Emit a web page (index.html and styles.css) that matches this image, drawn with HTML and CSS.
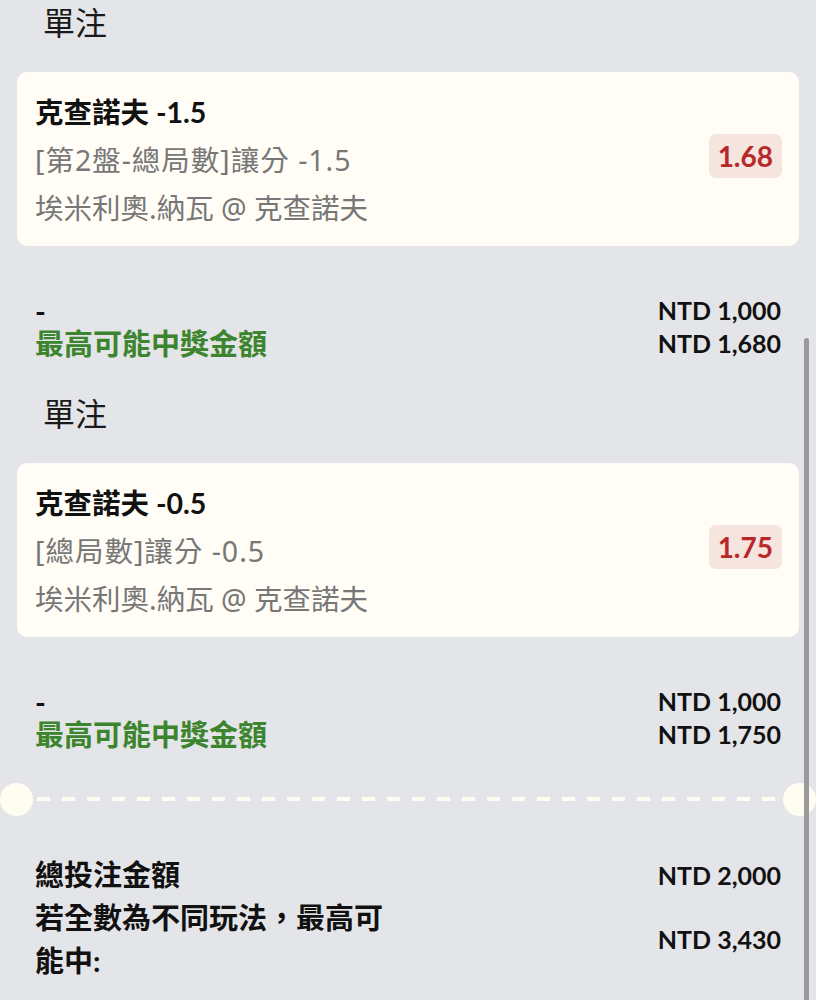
FILE: index.html
```html
<!DOCTYPE html>
<html lang="zh-Hant">
<head>
<meta charset="utf-8">
<link rel="stylesheet" href="styles.css">
</head>
<body>
<div class="page">
  <section class="bet">
    <h2 class="bet-type">單注</h2>
    <div class="card">
      <div class="card-info">
        <div class="card-title">克查諾夫 -1.5</div>
        <div class="card-line market">[第2盤-總局數]讓分 -1.5</div>
        <div class="card-line">埃米利奧.納瓦 @ 克查諾夫</div>
      </div>
      <div class="odds">1.68</div>
    </div>
    <div class="summary">
      <div class="row"><span class="label">-</span><span class="amount">NTD 1,000</span></div>
      <div class="row"><span class="label green">最高可能中獎金額</span><span class="amount">NTD 1,680</span></div>
    </div>
  </section>

  <section class="bet">
    <h2 class="bet-type">單注</h2>
    <div class="card">
      <div class="card-info">
        <div class="card-title">克查諾夫 -0.5</div>
        <div class="card-line market">[總局數]讓分 -0.5</div>
        <div class="card-line">埃米利奧.納瓦 @ 克查諾夫</div>
      </div>
      <div class="odds">1.75</div>
    </div>
    <div class="summary">
      <div class="row"><span class="label">-</span><span class="amount">NTD 1,000</span></div>
      <div class="row"><span class="label green">最高可能中獎金額</span><span class="amount">NTD 1,750</span></div>
    </div>
  </section>
</div>

<div class="divider">
  <span class="notch"></span>
  <span class="dashes"></span>
  <span class="notch"></span>
</div>

<div class="totals">
  <div class="total-row">
    <span class="total-label">總投注金額</span>
    <span class="amount">NTD 2,000</span>
  </div>
  <div class="total-row">
    <span class="total-label">若全數為不同玩法，最高可能中:</span>
    <span class="amount">NTD 3,430</span>
  </div>
</div>

<div class="scrollbar"></div>
</body>
</html>
```

FILE: styles.css
```css
html, body {
  margin: 0;
  padding: 0;
}
body {
  background: #e4e5e8;
  font-family: Lato, "Noto Sans CJK TC", sans-serif;
  color: #111;
  width: 816px;
  min-height: 1000px;
  position: relative;
  overflow: hidden;
}
.page {
  padding: 0 17px;
}
.bet-type {
  margin: 0 0 26px 0;
  padding-left: 26px;
  font-size: 32px;
  font-weight: 400;
  line-height: 46px;
  color: #1a1a1a;
}
.card {
  background: #fffdf5;
  border-radius: 10px;
  padding: 16px 17px 14px 18px;
  display: flex;
  align-items: center;
  justify-content: space-between;
}
.card-info {
  display: flex;
  flex-direction: column;
}
.card-title {
  font-size: 28.5px;
  font-weight: 700;
  line-height: 48px;
  color: #111;
}
.card-line {
  font-family: "Noto Sans", "Noto Sans CJK TC", sans-serif;
  font-size: 28.5px;
  line-height: 48px;
  color: #777;
}
.market {
  letter-spacing: 1px;
}
.odds {
  background: #f6e4de;
  color: #b8282a;
  font-weight: 700;
  font-size: 28px;
  line-height: 44px;
  padding: 0 9px;
  border-radius: 7px;
  margin-bottom: 8px;
}
.summary {
  margin-top: 48px;
  padding: 0 18px;
  margin-bottom: 31px;
}
.row {
  display: flex;
  justify-content: space-between;
  line-height: 33px;
  font-size: 29px;
  font-weight: 700;
}
.green {
  color: #3c842e;
}
.amount {
  font-size: 25px;
  font-weight: 700;
  color: #111;
}
.divider {
  display: flex;
  align-items: center;
  gap: 4px;
  height: 34px;
}
.notch {
  width: 33px;
  height: 33px;
  border-radius: 50%;
  background: #fffdf0;
  flex: 0 0 33px;
}
.dashes {
  flex: 1;
  height: 4px;
  background: repeating-linear-gradient(to right, #fffdf2 0 13px, transparent 13px 25px);
}
.totals {
  padding: 37px 35px 0 35px;
  display: flex;
  flex-direction: column;
}
.total-row {
  display: flex;
  justify-content: space-between;
  align-items: center;
}
.total-label {
  max-width: 50%;
  font-size: 29px;
  font-weight: 700;
  line-height: 43px;
  color: #111;
}
.scrollbar {
  position: absolute;
  left: 804px;
  top: 338px;
  width: 5px;
  height: 700px;
  border-radius: 3px;
  background: #9a9a9a;
}
```
